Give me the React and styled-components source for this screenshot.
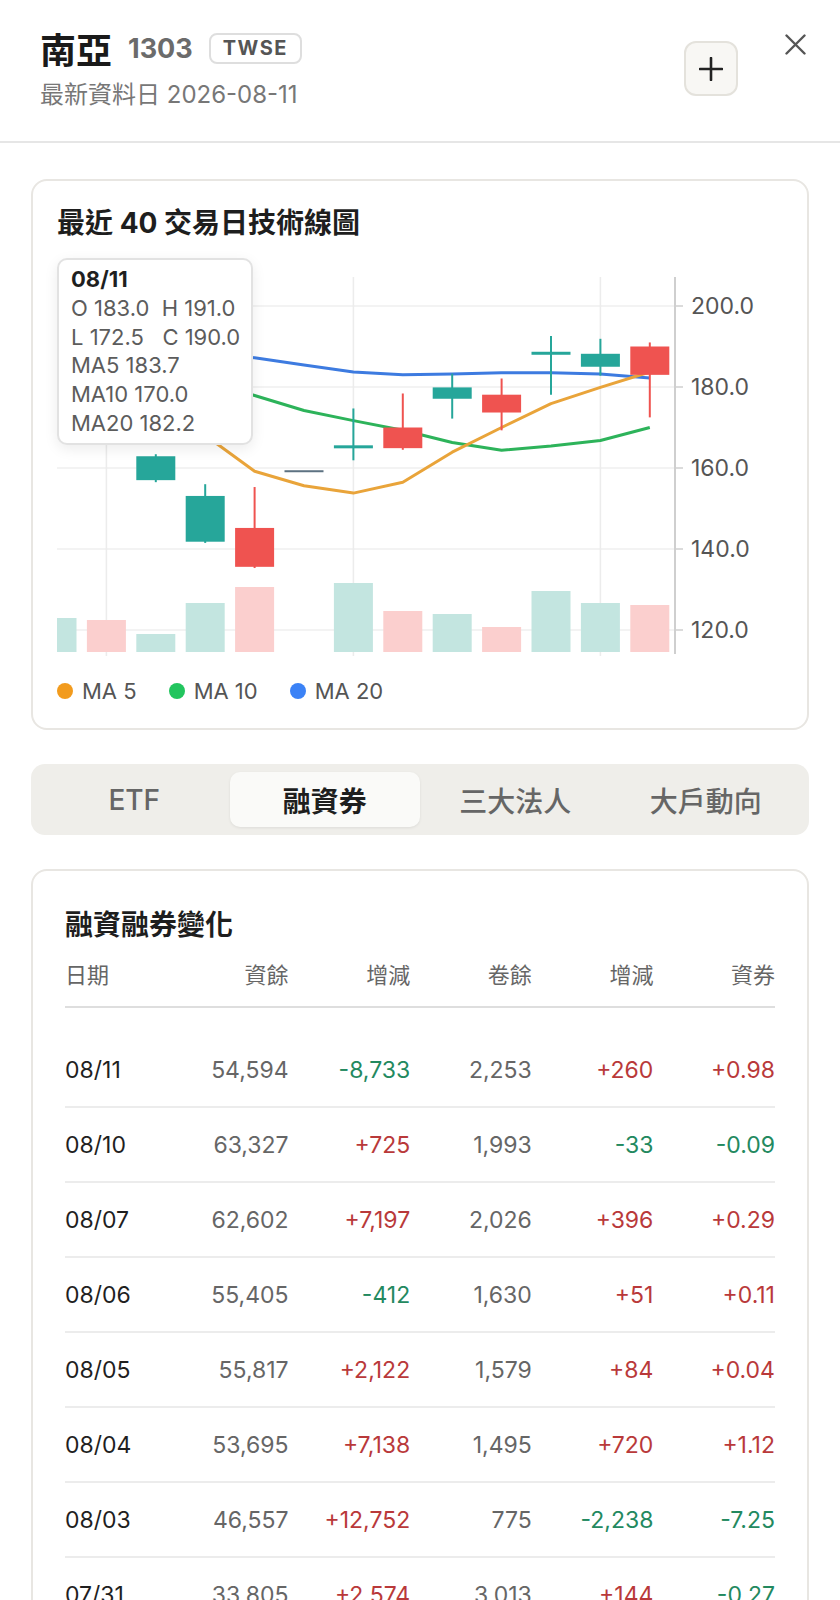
import React from 'react';
import styled, { createGlobalStyle } from 'styled-components';

const GlobalStyle = createGlobalStyle`
  body {
    margin: 0;
    background: #fff;
    font-family: Inter, "Noto Sans CJK TC", sans-serif;
    color: #1f1f1f;
  }
  * { box-sizing: border-box; }
`;

const Header = styled.header`
  display: flex;
  align-items: flex-start;
  padding: 28px 25px 29px 40px;
  border-bottom: 2px solid #e6e6e6;
`;

const TitleBlock = styled.div`
  flex: 1;
`;

const TitleRow = styled.div`
  display: flex;
  align-items: center;
  height: 40px;
`;

const Name = styled.h1`
  margin: 0;
  font-size: 36px;
  font-weight: 700;
  color: #1a1a1a;
`;

const Code = styled.span`
  margin-left: 16px;
  font-size: 27px;
  font-weight: 700;
  color: #6b6b6b;
`;

const Badge = styled.span`
  margin-left: 16px;
  height: 31px;
  line-height: 27px;
  padding: 0 12px;
  border: 2px solid #dedede;
  border-radius: 8px;
  font-size: 20px;
  font-weight: 700;
  letter-spacing: 1.5px;
  color: #555;
`;

const Sub = styled.div`
  margin-top: 10px;
  line-height: 34px;
  font-size: 24px;
  color: #777;
`;

const AddButton = styled.button`
  margin-top: 13px;
  width: 54px;
  height: 55px;
  display: flex;
  align-items: center;
  justify-content: center;
  border: 2px solid #e4e2dc;
  border-radius: 12px;
  background: #f8f7f4;
  padding: 0;
`;

const CloseButton = styled.button`
  margin-top: -4px;
  margin-left: 37px;
  width: 40px;
  height: 40px;
  display: flex;
  align-items: center;
  justify-content: center;
  border: none;
  background: none;
  padding: 0;
`;

const Main = styled.main`
  display: flex;
  flex-direction: column;
  gap: 34px;
  padding: 36px 31px 0;
`;

const Card = styled.section`
  border: 2px solid #e8e6e2;
  border-radius: 16px;
  background: #fff;
  padding: ${(p) => (p.$wide ? '32px' : '24px 24px 23px')};
`;

const CardTitle = styled.h2`
  margin: 0;
  font-size: 28px;
  font-weight: 700;
  line-height: ${(p) => (p.$tall ? '44px' : '36px')};
  color: #1e1e1e;
`;

const ChartWrap = styled.div`
  position: relative;
  margin-top: 10px;
  height: 410px;
`;

const Tooltip = styled.div`
  position: absolute;
  left: 0;
  top: 7px;
  width: 196px;
  padding: 5px 12px;
  border: 2px solid #e2e2e2;
  border-radius: 10px;
  background: #fff;
  box-shadow: 0 4px 14px rgba(0, 0, 0, 0.08);
  font-size: 22px;
  line-height: 28.8px;
  color: #5c5c5c;
  white-space: pre;
`;

const TipDate = styled.div`
  font-weight: 700;
  color: #1f1f1f;
`;

const Legend = styled.div`
  display: flex;
  gap: 32px;
  margin-top: 16px;
  line-height: 28px;
`;

const LegendItem = styled.div`
  display: flex;
  align-items: center;
  gap: 9px;
  font-size: 22px;
  color: #555;
`;

const Dot = styled.span`
  width: 16px;
  height: 16px;
  border-radius: 50%;
  background: ${(p) => p.$c};
`;

const Tabs = styled.nav`
  display: grid;
  grid-template-columns: repeat(4, 1fr);
  padding: 8px;
  border-radius: 14px;
  background: #efeeea;
`;

const Tab = styled.div`
  height: 55px;
  display: flex;
  align-items: center;
  justify-content: center;
  border-radius: 10px;
  font-size: 28px;
  font-weight: ${(p) => (p.$active ? 700 : 500)};
  color: ${(p) => (p.$active ? '#1e1e1e' : '#666')};
  background: ${(p) => (p.$active ? '#fafaf8' : 'transparent')};
  box-shadow: ${(p) => (p.$active ? '0 1px 3px rgba(0,0,0,0.08)' : 'none')};
`;

const Row = styled.div`
  display: grid;
  grid-template-columns: 102px repeat(5, 1fr);
  align-items: center;
`;

const HeadRow = styled(Row)`
  margin-top: 12px;
  line-height: 32px;
  padding-bottom: 15px;
  border-bottom: 2px solid #dedede;
  font-size: 22px;
  color: #666;
  span { text-align: right; }
  span:first-child { text-align: left; }
`;

const Rows = styled.div`
  margin-top: 25px;
`;

const DataRow = styled(Row)`
  height: 75px;
  border-bottom: 2px solid #ececec;
  font-size: 23px;
`;

const Cell = styled.span`
  text-align: right;
  color: ${(p) => (p.$tone === 'up' ? '#b9393a' : p.$tone === 'down' ? '#23895f' : '#666')};
`;

const DateCell = styled.span`
  color: #1f1f1f;
`;

const UP = '#ef5350';
const DOWN = '#26a69a';
const SLOT = 49.4;
const AXIS_X = 618;
const Y = (p) => 55 + (200 - p) * 4.05;

// O, H, L, C, vol (px)
const candles = [
  [184, 186, 178, 180, 34],
  [168, 175, 167, 172, 32],
  [162.9, 163.4, 156.5, 157.0, 18],
  [153.1, 156.0, 141.5, 141.8, 49],
  [135.6, 155.3, 135.3, 145.2, 65],
  [159.2, 159.2, 159.2, 159.2, 0],
  [165.6, 174.7, 161.9, 165.2, 69],
  [164.9, 178.4, 164.5, 170.0, 41],
  [179.9, 183.3, 172.2, 177.1, 38],
  [173.7, 182.1, 169.3, 178.1, 25],
  [188.7, 192.6, 178.1, 188.3, 61],
  [188.2, 191.9, 182.8, 185.0, 49],
  [183.0, 191.0, 172.5, 190.0, 47],
];

const ma5 = [184.0, 181.6, 176.7, 168.1, 159.2, 155.6, 153.8, 156.5, 163.9, 170.0, 175.9, 179.9, 183.7];
const ma10 = [188.9, 187.0, 184.5, 181.6, 177.9, 174.2, 171.7, 169.3, 166.3, 164.4, 165.4, 166.8, 170.0];
const ma20 = [190.1, 189.4, 188.9, 188.1, 187.2, 185.4, 183.7, 183.0, 183.2, 183.5, 183.5, 183.2, 182.2];

const rows = [
  ['08/11', '54,594', '-8,733', '2,253', '+260', '+0.98'],
  ['08/10', '63,327', '+725', '1,993', '-33', '-0.09'],
  ['08/07', '62,602', '+7,197', '2,026', '+396', '+0.29'],
  ['08/06', '55,405', '-412', '1,630', '+51', '+0.11'],
  ['08/05', '55,817', '+2,122', '1,579', '+84', '+0.04'],
  ['08/04', '53,695', '+7,138', '1,495', '+720', '+1.12'],
  ['08/03', '46,557', '+12,752', '775', '-2,238', '-7.25'],
  ['07/31', '33,805', '+2,574', '3,013', '+144', '-0.27'],
];

const tone = (v) => (v.startsWith('+') ? 'up' : v.startsWith('-') ? 'down' : undefined);

function line(values) {
  return values.map((v, i) => `${(i * SLOT).toFixed(1)},${Y(v).toFixed(1)}`).join(' ');
}

function Chart() {
  return (
    <svg width="726" height="410" viewBox="0 0 726 410">
      {[200, 180, 160, 140, 120].map((p) => (
        <g key={p}>
          <line x1="0" x2={AXIS_X} y1={Y(p)} y2={Y(p)} stroke="#efefef" strokeWidth="1.5" />
          <line x1={AXIS_X} x2={AXIS_X + 8} y1={Y(p)} y2={Y(p)} stroke="#cfcfcf" strokeWidth="1.5" />
          <text x="634" y={Y(p)} dy="0.36em" fontSize="23" fill="#555" fontFamily="Inter, sans-serif">
            {p.toFixed(1)}
          </text>
        </g>
      ))}
      {[1, 6, 11].map((i) => (
        <line key={i} x1={i * SLOT} x2={i * SLOT} y1="26" y2="405" stroke="#ececec" strokeWidth="1.5" />
      ))}
      <line x1={AXIS_X} x2={AXIS_X} y1="26" y2="403" stroke="#cfcfcf" strokeWidth="2" />

      {candles.map(([o, , , c, v], i) =>
        v > 0 ? (
          <rect
            key={'v' + i}
            x={i * SLOT - 19.5}
            y={401 - v}
            width="39"
            height={v}
            fill={c >= o ? '#fbcfce' : '#c3e5e0'}
          />
        ) : null
      )}

      <polyline points={line(ma20)} fill="none" stroke="#3d7be0" strokeWidth="3" strokeLinejoin="round" />
      <polyline points={line(ma10)} fill="none" stroke="#2db35a" strokeWidth="3" strokeLinejoin="round" />
      <polyline points={line(ma5)} fill="none" stroke="#e9a43a" strokeWidth="3" strokeLinejoin="round" />

      {candles.map(([o, h, l, c], i) => {
        const x = i * SLOT;
        const doji = o === c;
        const col = doji ? '#5d7282' : c > o ? UP : DOWN;
        const top = Y(Math.max(o, c));
        const hgt = Math.max(Y(Math.min(o, c)) - top, 3);
        return (
          <g key={'c' + i}>
            {!doji && <line x1={x} x2={x} y1={Y(h)} y2={Y(l)} stroke={col} strokeWidth="2" />}
            <rect x={x - 19.5} y={doji ? top - 1 : top} width="39" height={doji ? 2 : hgt} fill={col} />
          </g>
        );
      })}
    </svg>
  );
}

export default function App() {
  return (
    <>
      <GlobalStyle />
      <Header>
        <TitleBlock>
          <TitleRow>
            <Name>南亞</Name>
            <Code>1303</Code>
            <Badge>TWSE</Badge>
          </TitleRow>
          <Sub>最新資料日 2026-08-11</Sub>
        </TitleBlock>
        <AddButton aria-label="add">
          <svg width="24" height="24" viewBox="0 0 24 24">
            <path d="M12 1v22M1 12h22" stroke="#222" strokeWidth="2.6" strokeLinecap="round" />
          </svg>
        </AddButton>
        <CloseButton aria-label="close">
          <svg width="21" height="21" viewBox="0 0 21 21">
            <path d="M1.5 1.5l18 18M19.5 1.5l-18 18" stroke="#555" strokeWidth="2.4" strokeLinecap="round" />
          </svg>
        </CloseButton>
      </Header>

      <Main>
        <Card>
          <CardTitle>最近 40 交易日技術線圖</CardTitle>
          <ChartWrap>
            <Chart />
            <Tooltip>
              <TipDate>08/11</TipDate>
              <div>{'O 183.0  H 191.0'}</div>
              <div>{'L 172.5   C 190.0'}</div>
              <div>MA5 183.7</div>
              <div>MA10 170.0</div>
              <div>MA20 182.2</div>
            </Tooltip>
          </ChartWrap>
          <Legend>
            <LegendItem><Dot $c="#f29b1d" />MA 5</LegendItem>
            <LegendItem><Dot $c="#22c55e" />MA 10</LegendItem>
            <LegendItem><Dot $c="#3b82f6" />MA 20</LegendItem>
          </Legend>
        </Card>

        <Tabs>
          <Tab>ETF</Tab>
          <Tab $active>融資券</Tab>
          <Tab>三大法人</Tab>
          <Tab>大戶動向</Tab>
        </Tabs>

        <Card $wide>
          <CardTitle $tall>融資融券變化</CardTitle>
          <HeadRow>
            <span>日期</span>
            <span>資餘</span>
            <span>增減</span>
            <span>卷餘</span>
            <span>增減</span>
            <span>資券</span>
          </HeadRow>
          <Rows>
            {rows.map(([d, a, b, c, e, f]) => (
              <DataRow key={d}>
                <DateCell>{d}</DateCell>
                <Cell>{a}</Cell>
                <Cell $tone={tone(b)}>{b}</Cell>
                <Cell>{c}</Cell>
                <Cell $tone={tone(e)}>{e}</Cell>
                <Cell $tone={tone(f)}>{f}</Cell>
              </DataRow>
            ))}
          </Rows>
        </Card>
      </Main>
    </>
  );
}
